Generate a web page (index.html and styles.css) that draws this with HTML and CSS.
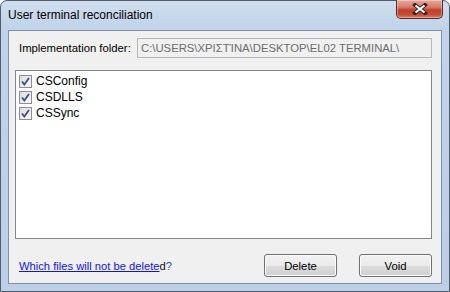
FILE: index.html
```html
<!DOCTYPE html>
<html>
<head>
<meta charset="utf-8">
<link rel="stylesheet" href="styles.css">
</head>
<body>
<div class="window">
  <div class="titlebar">
    <span class="title">User terminal reconciliation</span>
    <div class="close">
      <svg width="16" height="12" viewBox="0 0 16 12"><path d="M3 2 L13 10 M13 2 L3 10" stroke="#3a2020" stroke-width="4" stroke-linecap="square"/><path d="M3.5 2.5 L12.5 9.5 M12.5 2.5 L3.5 9.5" stroke="#fff" stroke-width="2.2"/></svg>
    </div>
  </div>
  <div class="client">
    <div class="folder-row">
      <span class="label">Implementation folder:</span>
      <div class="textbox">C:\USERS\ΧΡΙΣΤΊΝΑ\DESKTOP\EL02 TERMINAL\</div>
    </div>
    <div class="listbox">
      <div class="item"><span class="check"><svg width="13" height="13" viewBox="0 0 13 13"><path d="M3 6.5 L5.3 9.5 L10 3" stroke="#3d4f8c" stroke-width="1.8" fill="none"/></svg></span>CSConfig</div>
      <div class="item"><span class="check"><svg width="13" height="13" viewBox="0 0 13 13"><path d="M3 6.5 L5.3 9.5 L10 3" stroke="#3d4f8c" stroke-width="1.8" fill="none"/></svg></span>CSDLLS</div>
      <div class="item"><span class="check"><svg width="13" height="13" viewBox="0 0 13 13"><path d="M3 6.5 L5.3 9.5 L10 3" stroke="#3d4f8c" stroke-width="1.8" fill="none"/></svg></span>CSSync</div>
    </div>
    <div class="bottom-row">
      <span class="linklabel"><a class="link">Which files will not be delete</a><span class="plain">d</span><span class="q">?</span></span>
      <div class="buttons">
        <div class="btn">Delete</div>
        <div class="btn">Void</div>
      </div>
    </div>
  </div>
</div>
</body>
</html>
```
FILE: styles.css
```css
html, body {
  margin: 0;
  padding: 0;
  background: #fff;
}
body {
  font-family: "Liberation Sans", Arial, sans-serif;
  font-size: 11.3px;
  color: #000;
}
.window {
  width: 450px;
  height: 292px;
  box-sizing: border-box;
  border: 1px solid #4f5d6e;
  border-radius: 7px 7px 0 0;
  background: linear-gradient(180deg, #d0deee 0px, #c0d3e9 28px, #bccfe6 100%);
  display: flex;
  flex-direction: column;
}
.titlebar {
  height: 29px;
  display: flex;
  align-items: flex-start;
  padding-left: 7px;
  flex: none;
}
.title {
  margin-top: 7px;
  font-size: 12px;
  color: #000;
}
.close {
  margin-left: auto;
  margin-right: 6px;
  margin-top: -1px;
  width: 47px;
  height: 19px;
  box-sizing: border-box;
  border: 1px solid #5b2a26;
  border-top: none;
  border-radius: 0 0 5px 5px;
  background: linear-gradient(180deg, #e8a99d 0%, #d77a68 40%, #c0412e 55%, #c44a34 80%, #d9806a 100%);
  box-shadow: inset 0 0 0 1px rgba(255,255,255,0.35);
  display: flex;
  align-items: center;
  justify-content: center;
}
.client {
  flex: 1;
  margin: 0 7px 7px 7px;
  border: 1px solid #7e91a6;
  background: #f0f0f0;
  display: flex;
  flex-direction: column;
  padding: 7px 9px 6px 6px;
}
.folder-row {
  display: flex;
  align-items: center;
  height: 20px;
}
.label {
  margin-left: 4px;
  width: 118px;
  flex: none;
  white-space: nowrap;
  color: #000;
}
.textbox {
  flex: 1;
  height: 20px;
  box-sizing: border-box;
  border: 1px solid #b4b8bc;
  background: #f0f0f0;
  color: #6d6d6d;
  padding: 3px 0 0 3px;
  white-space: nowrap;
  overflow: hidden;
}
.listbox {
  margin-top: 12px;
  height: 169px;
  box-sizing: border-box;
  border: 1px solid #828790;
  background: #fff;
  padding: 2px 3px;
}
.item {
  display: flex;
  align-items: center;
  height: 16px;
  font-size: 12px;
}
.check {
  width: 13px;
  height: 13px;
  box-sizing: border-box;
  border: 1px solid #8e8f8f;
  background: linear-gradient(135deg, #dcdcdc, #f8f8f8);
  margin-right: 4px;
  display: flex;
  align-items: center;
  justify-content: center;
}
.check svg {
  flex: none;
}
.bottom-row {
  margin-top: auto;
  display: flex;
  align-items: center;
  height: 23px;
}
.linklabel {
  margin-left: 4px;
  font-size: 11.2px;
}
.link {
  color: #1010f0;
  text-decoration: underline;
}
.plain {
  color: #111;
}
.q {
  color: #3a4f8a;
}
.buttons {
  margin-left: auto;
  display: flex;
  gap: 22px;
}
.btn {
  width: 73px;
  height: 23px;
  box-sizing: border-box;
  border: 1px solid #707070;
  border-radius: 3px;
  background: linear-gradient(180deg, #f2f2f2 0%, #ebebeb 50%, #dddddd 51%, #cfcfcf 100%);
  box-shadow: inset 0 0 0 1px #fcfcfc;
  display: flex;
  align-items: center;
  justify-content: center;
  color: #000;
}
```
